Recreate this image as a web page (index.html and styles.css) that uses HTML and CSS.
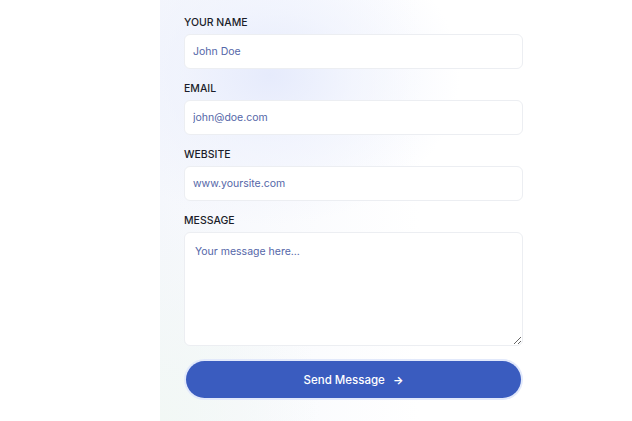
FILE: index.html
```html
<!DOCTYPE html>
<html lang="en">
<head>
    <meta charset="UTF-8">
    <meta name="viewport" content="width=device-width, initial-scale=1.0">
    <title>Contact</title>
    <link rel="stylesheet" href="styles.css">
</head>
<body>
    <div class="page">
        <div class="side"></div>
        <div class="panel">
            <form class="contact-form">
                <div class="form-group">
                    <label for="name">YOUR NAME</label>
                    <input type="text" id="name" placeholder="John Doe">
                </div>
                <div class="form-group">
                    <label for="email">EMAIL</label>
                    <input type="email" id="email" placeholder="john@doe.com">
                </div>
                <div class="form-group">
                    <label for="website">WEBSITE</label>
                    <input type="text" id="website" placeholder="www.yoursite.com">
                </div>
                <div class="form-group">
                    <label for="message">MESSAGE</label>
                    <textarea id="message" placeholder="Your message here..."></textarea>
                </div>
                <button type="submit" class="send-btn">Send Message <span class="arrow">&#8594;</span></button>
            </form>
        </div>
    </div>
</body>
</html>
```

FILE: styles.css
```css
body {
    margin: 0;
    padding: 0;
    background-color: #fff;
    font-family: Inter, "Noto Sans", sans-serif;
}
.page {
    display: flex;
    min-height: 421px;
}
.side {
    width: 160px;
    flex-shrink: 0;
    background-color: #fff;
}
.panel {
    flex: 1;
    padding: 15px 0 0 24px;
    background:
        radial-gradient(ellipse 190px 150px at 110px 75px, #e6ebfc 0%, rgba(236, 240, 253, 0.6) 45%, rgba(255, 255, 255, 0) 100%),
        radial-gradient(ellipse 160px 220px at 0 421px, #f2f8f5 0%, rgba(255, 255, 255, 0) 100%),
        linear-gradient(90deg, #f5f7fc 0%, #fff 55%);
}
.contact-form {
    width: 339px;
    display: flex;
    flex-direction: column;
    gap: 12px;
}
.form-group label {
    display: block;
    margin-bottom: 4px;
    font-size: 10.5px;
    line-height: 15px;
    font-weight: 500;
    color: #1b1d2a;
}
.form-group input,
.form-group textarea {
    display: block;
    box-sizing: border-box;
    width: 100%;
    height: 35px;
    padding: 0 8px;
    border: 1px solid #eceef2;
    border-radius: 6px;
    background-color: #fff;
    font-family: Inter, "Noto Sans", sans-serif;
    font-size: 10.5px;
    color: #4a5f9e;
    outline: none;
}
.form-group textarea {
    height: 114px;
    padding: 12px 10px;
    line-height: 14px;
    resize: vertical;
}
.form-group input::placeholder,
.form-group textarea::placeholder {
    color: #5466a8;
    opacity: 1;
}
.send-btn {
    margin: 3px 2px 0;
    height: 37px;
    border: none;
    border-radius: 19px;
    background-color: #3a5cbf;
    box-shadow: 0 0 0 2px #e2e9fb;
    color: #fff;
    font-family: Inter, "Noto Sans", sans-serif;
    font-size: 11.5px;
    font-weight: 500;
    cursor: pointer;
}
.send-btn .arrow {
    margin-left: 5px;
    font-weight: 700;
    font-size: 11px;
}
```
